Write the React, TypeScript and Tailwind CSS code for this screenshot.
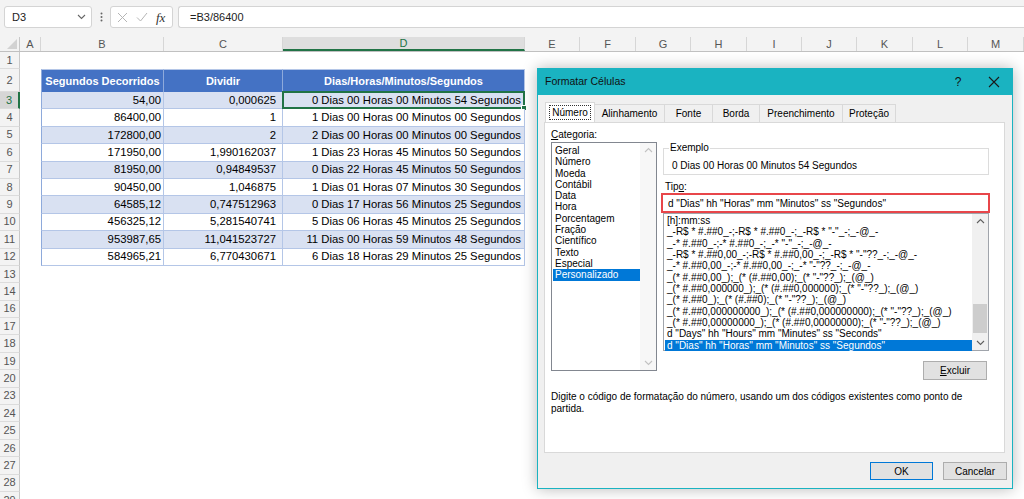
import React from 'react';

const cols = [
  { l: 'A', w: 21 },
  { l: 'B', w: 123 },
  { l: 'C', w: 119 },
  { l: 'D', w: 242 },
  { l: 'E', w: 55 },
  { l: 'F', w: 56 },
  { l: 'G', w: 55 },
  { l: 'H', w: 56 },
  { l: 'I', w: 55 },
  { l: 'J', w: 55 },
  { l: 'K', w: 56 },
  { l: 'L', w: 55 },
  { l: 'M', w: 56 },
];

const data: [string, string, string][] = [
  ['54,00', '0,000625', '0 Dias 00 Horas 00 Minutos 54 Segundos'],
  ['86400,00', '1', '1 Dias 00 Horas 00 Minutos 00 Segundos'],
  ['172800,00', '2', '2 Dias 00 Horas 00 Minutos 00 Segundos'],
  ['171950,00', '1,990162037', '1 Dias 23 Horas 45 Minutos 50 Segundos'],
  ['81950,00', '0,94849537', '0 Dias 22 Horas 45 Minutos 50 Segundos'],
  ['90450,00', '1,046875', '1 Dias 01 Horas 07 Minutos 30 Segundos'],
  ['64585,12', '0,747512963', '0 Dias 17 Horas 56 Minutos 25 Segundos'],
  ['456325,12', '5,281540741', '5 Dias 06 Horas 45 Minutos 25 Segundos'],
  ['953987,65', '11,041523727', '11 Dias 00 Horas 59 Minutos 48 Segundos'],
  ['584965,21', '6,770430671', '6 Dias 18 Horas 29 Minutos 25 Segundos'],
];

const rowLabels = [
  '1', '2', '3', '4', '5', '6', '7', '8', '9', '10', '11', '12',
  '13', '14', '16', '17', '18', '19', '20', '23', '24', '25', '26', '27', '28', '29',
];

const categories = [
  'Geral', 'Número', 'Moeda', 'Contábil', 'Data', 'Hora', 'Porcentagem', 'Fração', 'Científico', 'Texto', 'Especial', 'Personalizado',
];

const formats = [
  '[h]:mm:ss',
  '_-R$ * #.##0_-;-R$ * #.##0_-;_-R$ * "-"_-;_-@_-',
  '_-* #.##0_-;-* #.##0_-;_-* "-"_-;_-@_-',
  '_-R$ * #.##0,00_-;-R$ * #.##0,00_-;_-R$ * "-"??_-;_-@_-',
  '_-* #.##0,00_-;-* #.##0,00_-;_-* "-"??_-;_-@_-',
  '_(* #.##0,00_);_(* (#.##0,00);_(* "-"??_);_(@_)',
  '_(* #.##0,000000_);_(* (#.##0,000000);_(* "-"??_);_(@_)',
  '_(* #.##0_);_(* (#.##0);_(* "-"??_);_(@_)',
  '_(* #.##0,000000000_);_(* (#.##0,000000000);_(* "-"??_);_(@_)',
  '_(* #.##0,00000000_);_(* (#.##0,00000000);_(* "-"??_);_(@_)',
  'd "Days" hh "Hours" mm "Minutes" ss "Seconds"',
  'd "Dias" hh "Horas" mm "Minutos" ss "Segundos"',
];

function Chev({ up, color }: { up?: boolean; color: string }) {
  return (
    <svg width="9" height="6" viewBox="0 0 9 6">
      <path d={up ? 'M1 5 L4.5 1.5 L8 5' : 'M1 1 L4.5 4.5 L8 1'} stroke={color} strokeWidth="1.1" fill="none" />
    </svg>
  );
}

function rowH(label: string) {
  if (label === '1') return 'h-[17px]';
  if (label === '2') return 'h-[23px]';
  return 'h-[17.4px]';
}

export default function App() {
  return (
    <div className="relative w-[1024px] h-[499px] overflow-hidden bg-white font-['Liberation_Sans',Arial,sans-serif] text-black">
      {/* Formula bar */}
      <div className="h-[37px] bg-[#f3f3f3] flex items-start pt-[6px] pl-[4px]">
        <div className="w-[88px] h-[22px] bg-white border border-[#d4d4d4] rounded-[3px] flex items-center pl-[7px] pr-[5px] text-[11px] text-[#222]">
          <span className="flex-1">D3</span>
          <Chev color="#666" />
        </div>
        <div className="w-[18px] h-[22px] flex items-center justify-center">
          <svg width="3" height="10" viewBox="0 0 3 10">
            <circle cx="1.5" cy="1.5" r="1" fill="#666" />
            <circle cx="1.5" cy="5" r="1" fill="#666" />
            <circle cx="1.5" cy="8.5" r="1" fill="#666" />
          </svg>
        </div>
        <div className="w-[63px] h-[22px] bg-white border border-[#d4d4d4] rounded-[3px] flex items-center pl-[6px] gap-[8px]">
          <svg width="11" height="11" viewBox="0 0 11 11">
            <path d="M1 1 L10 10 M10 1 L1 10" stroke="#b5b5b5" strokeWidth="1" />
          </svg>
          <svg width="12" height="10" viewBox="0 0 12 10">
            <path d="M1 5.5 L4.5 9 L11 1" stroke="#b5b5b5" strokeWidth="1" fill="none" />
          </svg>
          <span className="font-['Liberation_Serif',serif] italic text-[13px] text-[#333] leading-none">fx</span>
        </div>
        <div className="ml-[5px] flex-1 h-[22px] bg-white border border-[#d4d4d4] rounded-l-[3px] border-r-0 flex items-center pl-[11px] text-[11px] text-[#222]">
          =B3/86400
        </div>
      </div>

      {/* Column headers */}
      <div className="flex h-[15px] bg-[#f3f3f3] border-b border-[#c0c0c0]">
        <div className="w-[20px] shrink-0 border-r border-[#c8c8c8] relative">
          <svg className="absolute right-[2px] bottom-[2px]" width="10" height="10" viewBox="0 0 10 10">
            <path d="M10 0 L10 10 L0 10 Z" fill="#d2d2d2" />
          </svg>
        </div>
        {cols.map((c) => (
          <div
            key={c.l}
            style={{ width: c.w }}
            className={`shrink-0 flex items-center justify-center text-[11px] border-r border-[#d6d6d6] ${
              c.l === 'D' ? 'bg-[#dedede] border-b-2 border-b-[#217346] text-[#217346]' : 'text-[#555]'
            }`}
          >
            {c.l}
          </div>
        ))}
      </div>

      <div className="flex">
        {/* Row header column */}
        <div className="w-[20px] shrink-0 flex flex-col">
          {rowLabels.map((l) => (
            <div
              key={l}
              className={`${rowH(l)} w-[20px] flex items-center justify-center text-[11px] leading-none border-b border-[#dcdcdc] ${
                l === '3'
                  ? 'bg-[#d6d6d6] border-r-2 border-r-[#217346] text-[#217346]'
                  : 'bg-[#f3f3f3] border-r border-r-[#c8c8c8] text-[#555]'
              }`}
            >
              <span className="whitespace-nowrap">{l}</span>
            </div>
          ))}
        </div>

        {/* Grid */}
        <div className="flex-1 flex flex-col">
          <div className="h-[17px]" />
          <div className="flex h-[23px] pl-[21px]">
            <div className="w-[123px] shrink-0 bg-[#4472c4] border-l border-[#8eaadb] border-r border-r-[#8eaadb] border-t border-t-[#b4c6e7] flex items-center justify-center text-white font-bold text-[11px]">
              Segundos Decorridos
            </div>
            <div className="w-[119px] shrink-0 bg-[#4472c4] border-r border-[#8eaadb] border-t border-t-[#b4c6e7] flex items-center justify-center text-white font-bold text-[11px]">
              Dividir
            </div>
            <div className="w-[242px] shrink-0 bg-[#4472c4] border-r border-[#b4c6e7] border-t border-t-[#b4c6e7] flex items-center justify-center text-white font-bold text-[11px]">
              Dias/Horas/Minutos/Segundos
            </div>
          </div>
          {data.map((r, i) => {
            const band = i % 2 === 0 ? 'bg-[#d9e1f2]' : 'bg-white';
            return (
              <div key={i} className="flex h-[17.4px] pl-[21px]">
                <div className={`w-[123px] shrink-0 ${band} border-l border-[#8eaadb] border-r border-r-[#b4c6e7] border-b border-b-[#b4c6e7] flex items-center justify-end pr-[2px] text-[11.3px]`}>
                  {r[0]}
                </div>
                <div className={`w-[119px] shrink-0 ${band} border-r border-[#b4c6e7] border-b border-b-[#b4c6e7] flex items-center justify-end pr-[6px] text-[11.3px]`}>
                  {r[1]}
                </div>
                <div className={`relative w-[242px] shrink-0 ${band} border-r border-[#b4c6e7] border-b border-b-[#b4c6e7] flex items-center justify-end pr-[3px] text-[11.3px]`}>
                  {r[2]}
                  {i === 0 && (
                    <div className="absolute -left-[1px] -top-[1px] -right-[1px] -bottom-[1px] border-2 border-[#217346]">
                      <div className="absolute -right-[4px] -bottom-[4px] w-[6px] h-[6px] bg-[#217346] border border-white" />
                    </div>
                  )}
                </div>
              </div>
            );
          })}
        </div>
      </div>

      {/* Dialog */}
      <div className="absolute left-[537px] top-[68px] w-[476px] h-[421px] bg-[#f0f0f0] border border-[#1ab3c1] shadow-[0_0_14px_rgba(0,0,0,0.28)] flex flex-col text-[10px]">
        <div className="h-[26px] bg-[#1ab3c1] flex items-center pl-[7px] text-[10.5px] text-[#111]">
          <span className="flex-1">Formatar Células</span>
          <span className="w-[20px] text-center text-[12px] mr-[20px]">?</span>
          <svg className="mr-[12px]" width="12" height="12" viewBox="0 0 12 12">
            <path d="M1 1 L11 11 M11 1 L1 11" stroke="#1a1a1a" strokeWidth="1.1" />
          </svg>
        </div>
        <div className="pl-[6px] pt-[7px] flex flex-col">
          {/* Tabs */}
          <div className="flex items-end h-[20px] pl-[1px] relative z-10">
            <div className="w-[50px] h-[20px] bg-white border border-[#d9d9d9] border-b-0 flex items-center justify-center">
              <span className="border border-dotted border-[#333] px-[2px] leading-[13px]">Número</span>
            </div>
            {[
              ['Alinhamento', 70],
              ['Fonte', 48],
              ['Borda', 47],
              ['Preenchimento', 83],
              ['Proteção', 53],
            ].map(([t, w]) => (
              <div
                key={t as string}
                style={{ width: w as number }}
                className="h-[18px] bg-[#f0f0f0] border border-[#d9d9d9] border-l-0 border-b-0 flex items-center justify-center"
              >
                {t}
              </div>
            ))}
          </div>
          {/* Panel */}
          <div className="w-[461px] h-[331px] bg-white border border-[#d9d9d9] pt-[5px] pl-[6px] flex flex-col">
            <div className="flex items-start">
              <div className="w-[106px] flex flex-col">
                <div className="h-[14px] leading-[14px]">
                  <span className="underline">C</span>ategoria:
                </div>
                <div className="h-[229px] border border-[#828790] flex">
                  <div className="flex-1 pt-[2px] pl-[1px]">
                    {categories.map((c) => (
                      <div
                        key={c}
                        className={`h-[11.3px] leading-[11.3px] pl-[2px] ${c === 'Personalizado' ? 'bg-[#0078d7] text-white' : ''}`}
                      >
                        {c}
                      </div>
                    ))}
                  </div>
                  <div className="w-[16px] bg-[#f7f7f7] flex flex-col justify-between items-center py-[4px]">
                    <Chev up color="#c2c2c2" />
                    <Chev color="#c2c2c2" />
                  </div>
                </div>
              </div>
              <div className="ml-[6px] w-[326px] flex flex-col">
                <div className="relative mt-[20px] h-[27px] border border-[#dcdcdc]">
                  <span className="absolute -top-[7px] left-[5px] px-[1px] bg-white leading-[12px]">Exemplo</span>
                  <div className="pl-[8px] pt-[11px] leading-[12px]">0 Dias 00 Horas 00 Minutos 54 Segundos</div>
                </div>
                <div className="mt-[6px] h-[12px] leading-[12px] pl-[2px]">
                  Tip<span className="underline">o</span>:
                </div>
                <div className="-ml-[2px] w-[329px] h-[20px] border-2 border-[#e8464a] flex items-center pl-[5px]">
                  d "Dias" hh "Horas" mm "Minutos" ss "Segundos"
                </div>
                <div className="h-[138px] border border-[#a0a4ab] flex">
                  <div className="flex-1 pt-[1px] pl-[1px]">
                    {formats.map((f, idx) => (
                      <div
                        key={idx}
                        className={`h-[11.35px] leading-[11.35px] pl-[2px] whitespace-nowrap overflow-hidden ${
                          idx === formats.length - 1 ? 'bg-[#0078d7] text-white' : ''
                        }`}
                      >
                        {f}
                      </div>
                    ))}
                  </div>
                  <div className="w-[16px] bg-[#f0f0f0] flex flex-col items-center">
                    <div className="h-[14px] flex items-center">
                      <Chev up color="#606060" />
                    </div>
                    <div className="mt-[76px] w-[14px] h-[29px] bg-[#cdcdcd]" />
                    <div className="flex-1" />
                    <div className="h-[14px] flex items-center">
                      <Chev color="#606060" />
                    </div>
                  </div>
                </div>
                <div className="mt-[10px] flex justify-end pr-[2px]">
                  <div className="w-[64px] h-[19px] bg-[#e1e1e1] border border-[#adadad] flex items-center justify-center">
                    <span>
                      <span className="underline">E</span>xcluir
                    </span>
                  </div>
                </div>
              </div>
            </div>
            <div className="mt-[11px] leading-[12px] pr-[20px]">
              Digite o código de formatação do número, usando um dos códigos existentes como ponto de partida.
            </div>
          </div>
          {/* Buttons */}
          <div className="mt-[9px] flex justify-end gap-[10px] pr-[5px]">
            <div className="w-[63px] h-[18px] bg-[#e1e1e1] border border-[#0078d7] flex items-center justify-center">OK</div>
            <div className="w-[64px] h-[18px] bg-[#e1e1e1] border border-[#adadad] flex items-center justify-center">Cancelar</div>
          </div>
        </div>
      </div>
    </div>
  );
}
